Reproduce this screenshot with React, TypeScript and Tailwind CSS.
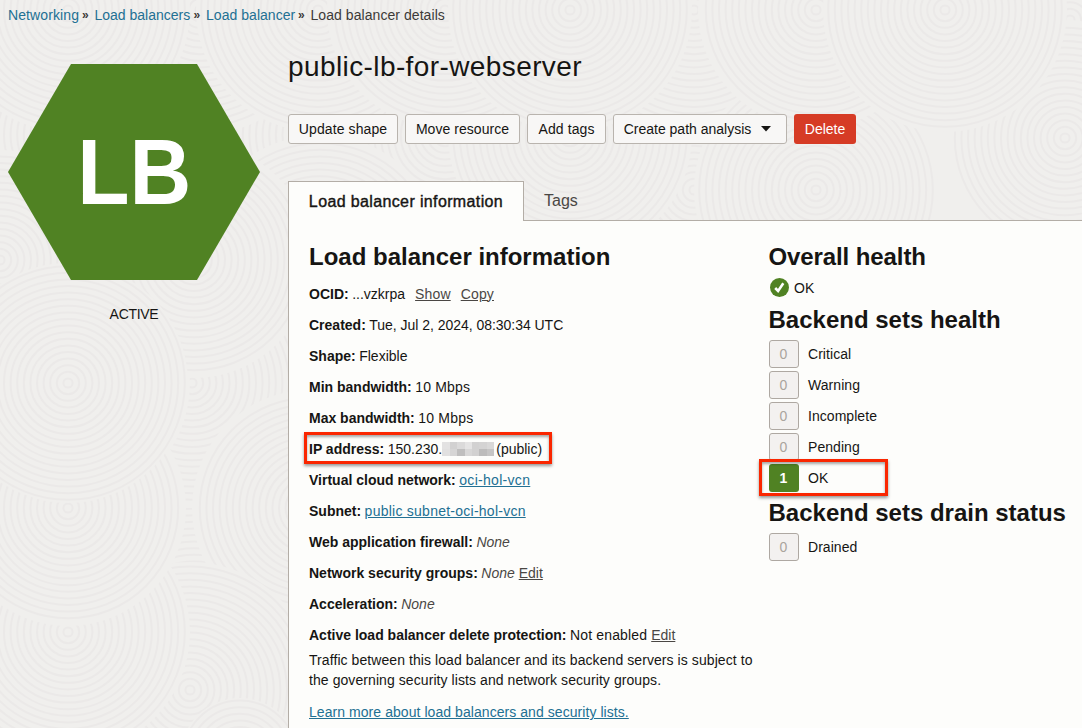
import type { ReactNode } from "react";

// Swirl backdrop: [cx, cy, radius], later discs cover earlier ones.
const SWIRLS: [number, number, number][] = [
  [68, 135, 125], [320, 135, 125], [445, 135, 125], [694, 190, 125], [200, 10, 125],
  [320, 260, 125], [570, 135, 122], [318, 10, 122], [68, 10, 122], [445, 10, 118], [694, 10, 125],
  [816, 190, 122], [816, 10, 118], [570, 10, 122], [1070, 20, 110], [1065, 138, 118], [945, 10, 122],
  [194, 632, 130], [194, 760, 128], [192, 383, 125], [68, 383, 122], [194, 260, 118], [0, 260, 110],
  [310, 508, 118], [190, 690, 128], [240, 758, 60], [68, 632, 122], [-30, 508, 95], [68, 508, 118], [68, 383, 120],
];

function Backdrop() {
  return (
    <svg className="absolute inset-0 h-full w-full" viewBox="0 0 1082 728" aria-hidden="true">
      {SWIRLS.map(([cx, cy, r], i) => (
        <g key={i} fill="none" stroke="#ebe9e8" strokeWidth="2">
          <circle cx={cx} cy={cy} r={r} fill="#f0efed" stroke="none" />
          {Array.from({ length: Math.floor(r / 6.6) }, (_, k) => (
            <circle key={k} cx={cx} cy={cy} r={(k + 1) * 6.6 - 2} />
          ))}
        </g>
      ))}
    </svg>
  );
}

function Row({ label, children }: { label: string; children: ReactNode }) {
  return (
    <div className="relative flex h-[31px] items-center whitespace-pre">
      <span className="font-bold">{label}</span>
      <span className="w-[3.5px]"> </span>
      {children}
    </div>
  );
}

function Count({ value, label, marked = false }: { value: number; label: string; marked?: boolean }) {
  return (
    <div className="relative flex h-[31px] items-center gap-[9.5px]">
      <span
        className={
          value > 0
            ? "flex h-7 w-[30px] items-center justify-center rounded-[3px] bg-[#508223] font-bold text-white"
            : "flex h-7 w-[30px] items-center justify-center rounded-[3px] border border-[#aea8a2] bg-[#f3f1f0] text-[#aaa49d]"
        }
      >
        {value}
      </span>
      <span className="tracking-[0.05px]">{label}</span>
      {marked && (
        <span className="absolute -left-[10px] -top-[3px] h-[37px] w-[129px] border-[3px] border-[#fa2600] shadow-[0_2px_3px_rgba(0,0,0,0.4),inset_0_2px_3px_rgba(0,0,0,0.35)]" />
      )}
    </div>
  );
}

const MOSAIC = [
  "#e3e2e2", "#d2d1d1", "#dbdada", "#e5e4e4", "#d2d1d1", "#d4d3d3", "#d9d8d8",
  "#e1e0e0", "#d6d5d5", "#bfbebe", "#d8d7d7", "#d2d1d1", "#bdbcbc", "#c6c5c5",
];

const BUTTON =
  "flex h-[30px] items-center justify-center rounded-[3px] border border-[#b9b4ae] bg-[#f8f7f6] whitespace-nowrap";
const H2 = "h-[31px] whitespace-nowrap text-[24px] font-bold leading-[31px]";

export default function App() {
  return (
    <div className="relative h-[728px] w-[1082px] overflow-hidden bg-[#f0efed] font-['Liberation_Sans',sans-serif] text-[14px] leading-5 text-[#161513]">
      <Backdrop />
      <div className="relative flex h-full flex-col">
        <nav className="flex h-[30px] items-center pl-2 whitespace-pre text-[#3c3a38]">
          <a className="w-[71px] tracking-[0.1px] text-[#227093]">Networking</a>
          <span className="w-[15.5px] pl-[3px] text-[12px] font-bold">»</span>
          <a className="w-[96px] text-[#227093]">Load balancers</a>
          <span className="w-[15.5px] pl-[3px] text-[12px] font-bold">»</span>
          <a className="w-[89px] tracking-[0.04px] text-[#227093]">Load balancer</a>
          <span className="w-[15.5px] pl-[3px] text-[12px] font-bold">»</span>
          <span className="tracking-[0.06px]">Load balancer details</span>
        </nav>

        <div className="flex flex-1">
          <aside className="flex w-[288px] flex-col pl-2 pt-[34px]">
            <div className="flex h-[216px] w-[252px] items-center justify-center bg-[#508223] [clip-path:polygon(25%_0,75%_0,100%_50%,75%_100%,25%_100%,0_50%)]">
              <span className="scale-x-[0.93] text-[92px] font-bold leading-none text-white">LB</span>
            </div>
            <div className="mt-6 w-[252px] text-center tracking-[-0.3px]">ACTIVE</div>
          </aside>

          <main className="flex flex-1 flex-col">
            <h1 className="mt-5 h-[34px] whitespace-nowrap text-[28px] leading-[34px] tracking-[0.4px]">
              public-lb-for-webserver
            </h1>

            <div className="mt-[30px] flex gap-[7px]">
              <button className={`${BUTTON} w-[110px] tracking-[0.1px]`}>Update shape</button>
              <button className={`${BUTTON} w-[115px] tracking-[0.05px]`}>Move resource</button>
              <button className={`${BUTTON} w-[79px] tracking-[0.1px]`}>Add tags</button>
              <button className={`${BUTTON} w-[174px] gap-[10px] pr-[5px]`}>
                Create path analysis
                <svg width="10" height="6" viewBox="0 0 10 6"><path d="M0 0h10L5 5.6z" fill="#161513" /></svg>
              </button>
              <button className="h-[30px] w-[62px] rounded-[3px] bg-[#d63b25] text-white">Delete</button>
            </div>

            <div className="mt-[37px] flex h-10 text-[16px]">
              <div className="z-10 flex h-[40px] w-[236px] items-center justify-center border border-b-0 border-[#b3ada6] bg-[#fdfdfb] tracking-[0.37px] [-webkit-text-stroke:0.4px_#161513]">
                Load balancer information
              </div>
              <div className="flex flex-1 items-center border-b border-[#b3ada6] pl-5 text-[#4a4744]">Tags</div>
            </div>

            <div className="flex flex-1 border-l border-[#b3ada6] bg-[#fdfdfb] pl-5 pt-[20px]">
              <section className="w-[459.5px]">
                <h2 className={`${H2} mb-[6px]`}>Load balancer information</h2>
                <Row label="OCID:">
                  ...vzkrpa
                  <a className="ml-[10px] tracking-[0.15px] text-[#4a4744] underline">Show</a>
                  <a className="ml-[10px] tracking-[0.15px] text-[#4a4744] underline">Copy</a>
                </Row>
                <Row label="Created:"><span className="tracking-[-0.03px]">Tue, Jul 2, 2024, 08:30:34 UTC</span></Row>
                <Row label="Shape:">Flexible</Row>
                <Row label="Min bandwidth:"><span className="tracking-[0.2px]">10 Mbps</span></Row>
                <Row label="Max bandwidth:"><span className="tracking-[0.2px]">10 Mbps</span></Row>
                <Row label="IP address:">
                  150.230.
                  <span className="mr-[2px] grid h-[14px] w-[52px] grid-cols-7">
                    {MOSAIC.map((c, i) => (
                      <i key={i} style={{ background: c }} />
                    ))}
                  </span>
                  (public)
                  <span className="absolute -left-[5px] -top-px h-[32px] w-[248px] border-[3px] border-[#fa2600] shadow-[0_2px_3px_rgba(0,0,0,0.4),inset_0_2px_3px_rgba(0,0,0,0.35)]" />
                </Row>
                <Row label="Virtual cloud network:">
                  <a className="tracking-[0.3px] text-[#227093] underline">oci-hol-vcn</a>
                </Row>
                <Row label="Subnet:">
                  <a className="tracking-[0.25px] text-[#227093] underline">public subnet-oci-hol-vcn</a>
                </Row>
                <Row label="Web application firewall:">
                  <em className="text-[#4a4744]">None</em>
                </Row>
                <Row label="Network security groups:">
                  <em className="text-[#4a4744]">None </em>
                  <a className="text-[#4a4744] underline">Edit</a>
                </Row>
                <Row label="Acceleration:">
                  <em className="text-[#4a4744]">None</em>
                </Row>
                <Row label="Active load balancer delete protection:">
                  <span className="tracking-[0.15px]">Not enabled </span>
                  <a className="text-[#4a4744] underline">Edit</a>
                </Row>
                <p className="whitespace-nowrap tracking-[0.075px]">
                  Traffic between this load balancer and its backend servers is subject to
                  <br />
                  the governing security lists and network security groups.
                </p>
                <a className="mt-3 block w-fit tracking-[0.06px] text-[#227093] underline">
                  Learn more about load balancers and security lists.
                </a>
              </section>

              <section>
                <h2 className={`${H2} tracking-[-0.1px]`}>Overall health</h2>
                <div className="flex h-[31px] items-center gap-[5.5px]">
                  <svg className="ml-px" width="19" height="19" viewBox="0 0 19 19">
                    <circle cx="9.5" cy="9.5" r="9.5" fill="#508223" />
                    <path d="M5.2 10l2.9 2.9 5.2-7.6" fill="none" stroke="#fff" strokeWidth="2.6" />
                  </svg>
                  OK
                </div>
                <h2 className={`${H2} mt-px mb-[3px]`}>Backend sets health</h2>
                <Count value={0} label="Critical" />
                <Count value={0} label="Warning" />
                <Count value={0} label="Incomplete" />
                <Count value={0} label="Pending" />
                <Count value={1} label="OK" marked />
                <h2 className={`${H2} mt-1 mb-[3px]`}>Backend sets drain status</h2>
                <Count value={0} label="Drained" />
              </section>
            </div>
          </main>
        </div>
      </div>
    </div>
  );
}
